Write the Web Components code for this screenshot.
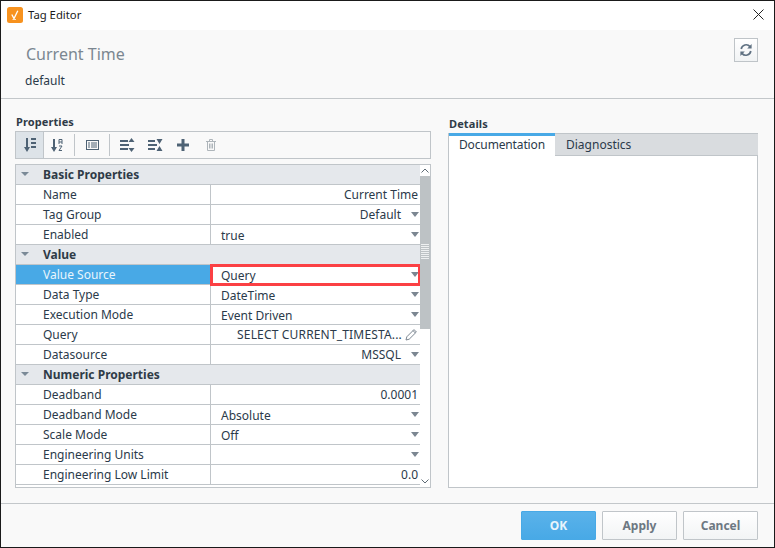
<!DOCTYPE html>
<html><head><meta charset="utf-8">
<style>
html,body{margin:0;padding:0;width:775px;height:548px;overflow:hidden;background:#fff}
body{font:12px "Noto Sans",sans-serif;color:#2b3a4a}
</style></head><body>
<tag-window>
  <title-bar slot="title">Tag Editor</title-bar>
  <tag-header slot="header" name="Current Time" provider="default"></tag-header>
  <prop-panel slot="left">
    <section-row label="Basic Properties"></section-row>
    <prop-row name="Name" value="Current Time" end></prop-row>
    <prop-row name="Tag Group" value="Default" end drop></prop-row>
    <prop-row name="Enabled" value="true" drop></prop-row>
    <section-row label="Value"></section-row>
    <prop-row name="Value Source" value="Query" drop selected></prop-row>
    <prop-row name="Data Type" value="DateTime" drop></prop-row>
    <prop-row name="Execution Mode" value="Event Driven" drop></prop-row>
    <prop-row name="Query" value="SELECT CURRENT_TIMESTA..." end pencil></prop-row>
    <prop-row name="Datasource" value="MSSQL" end drop></prop-row>
    <section-row label="Numeric Properties"></section-row>
    <prop-row name="Deadband" value="0.0001" end></prop-row>
    <prop-row name="Deadband Mode" value="Absolute" drop></prop-row>
    <prop-row name="Scale Mode" value="Off" drop></prop-row>
    <prop-row name="Engineering Units" value="" drop></prop-row>
    <prop-row name="Engineering Low Limit" value="0.0" end></prop-row>
  </prop-panel>
  <details-panel slot="right"></details-panel>
  <dialog-btn slot="foot" primary>OK</dialog-btn>
  <dialog-btn slot="foot">Apply</dialog-btn>
  <dialog-btn slot="foot">Cancel</dialog-btn>
</tag-window>
<script>
function def(name, html){
  customElements.define(name, class extends HTMLElement{
    constructor(){super();this.attachShadow({mode:'open'});}
    connectedCallback(){
      this.shadowRoot.innerHTML = typeof html==='function'?html(this):html;
    }
  });
}
const attr=(e,n)=>e.getAttribute(n)||'';
const esc=s=>s.replace(/&/g,'&amp;').replace(/</g,'&lt;');

def('tag-window',`<style>
:host{display:flex;flex-direction:column;box-sizing:border-box;width:775px;height:548px;border:1px solid #1a1a1a;background:#f9f9f9}
.header{height:68px;border-bottom:1px solid #c3c7ca;flex:none}
.main{flex:1;display:grid;grid-template-columns:416px 310px;column-gap:17px;padding:15px 16px 15px 14px;min-height:0;border-bottom:1px solid #c3c7ca}
.foot{flex:none;height:43px;display:flex;justify-content:flex-end;gap:6px;padding:7px 16px 0 0;box-sizing:border-box}
</style>
<slot name="title"></slot>
<div class="header"><slot name="header"></slot></div>
<div class="main"><slot name="left"></slot><slot name="right"></slot></div>
<div class="foot"><slot name="foot"></slot></div>`);

def('title-bar',`<style>
:host{display:flex;align-items:center;height:29px;flex:none;background:#fff;color:#1a1a1a;font-size:11.3px;padding-left:6px;gap:5px}
svg{flex:none;display:block}
.i{margin-top:-1px}
.t{flex:1;padding-bottom:2px}
.x{margin:-2px 10px 0 0}
</style>
<svg class="i" width="16" height="16" viewBox="0 0 16 16"><rect width="16" height="16" rx="2.500" fill="#f7921e"/><path d="M4.800 7.500 7 11.500 10.800 3.800" fill="none" stroke="#fff" stroke-width="1.300"/><path d="M5.500 12.500h3.500" stroke="#fde3c3" stroke-width="1"/></svg>
<span class="t"><slot></slot></span>
<svg class="x" width="11" height="11" viewBox="0 0 11 11"><path d="M.5.500 10.500 10.500M10.500.500.500 10.500" stroke="#222" stroke-width="1" fill="none"/></svg>`);

def('tag-header',e=>`<style>
:host{display:flex;height:100%;justify-content:space-between}
.n{font-size:16px;color:#7b8791;line-height:22px;margin:13px 0 0 25px}
.p{font-size:12px;color:#2b3a4a;line-height:16px;margin:8px 0 0 24px}
.r{box-sizing:border-box;width:24px;height:24px;margin:8px 16px 0 0;border:1px solid #bfc4c8;background:linear-gradient(#fff,#f1f3f4);display:flex;align-items:center;justify-content:center}
</style>
<div><div class="n">${esc(attr(e,'name'))}</div><div class="p">${esc(attr(e,'provider'))}</div></div>
<div class="r"><svg width="14" height="14" viewBox="0 0 14 14"><path d="M2.200 6A5 5 0 0 1 11 3.600" fill="none" stroke="#5f7182" stroke-width="1.700"/><path d="M12.600 1v4.400H8.200z" fill="#5f7182"/><path d="M11.800 8A5 5 0 0 1 3 10.400" fill="none" stroke="#5f7182" stroke-width="1.700"/><path d="M1.400 13V8.600h4.400z" fill="#5f7182"/></svg></div>`);

const ic={
 cat:`<svg width="12" height="14" viewBox="0 0 12 14" fill="#4e6274"><path d="M2 0h2v9h2l-3 5-3-5h2z"/><path d="M7 0h5v2H7zM7 4h5v2H7zM7 8h5v2H7z"/></svg>`,
 az:`<svg width="12" height="14" viewBox="0 0 12 14" fill="#4e6274"><path d="M2 1h2v8h2l-3 5-3-5h2z"/><path d="M8 6V1.500h3V6M8 4h3M8 8h3l-3 4.500h3" fill="none" stroke="#4e6274" stroke-width="1"/></svg>`,
 list:`<svg width="13" height="10" viewBox="0 0 13 10"><rect x=".5" y=".5" width="12" height="9" fill="none" stroke="#4e6274"/><path d="M2 3h2M5 3h6M2 5h2M5 5h6M2 7h2M5 7h6" stroke="#4e6274"/></svg>`,
 exp:`<svg width="15" height="14" viewBox="0 0 15 14" fill="#4e6274"><path d="M0 2h8v2H0zM0 6h9v2H0zM0 10h8v2H0z"/><path d="M11.500 0l3 4h-6zM11.500 14l-3-4h6z"/></svg>`,
 col:`<svg width="15" height="14" viewBox="0 0 15 14" fill="#4e6274"><path d="M0 2h7v2H0zM0 6h9v2H0zM0 10h7v2H0z"/><path d="M8.500 1h6l-3 5zM8.500 13h6l-3-5z"/></svg>`,
 add:`<svg width="12" height="12" viewBox="0 0 12 12" fill="#4e6274"><path d="M4.500 0h3v4.500H12v3H7.500V12h-3V7.500H0v-3h4.500z"/></svg>`,
 del:`<svg width="10" height="12" viewBox="0 0 10 12" fill="none" stroke="#aeb5ba"><path d="M0 2.500h10M3.500 2V.5h3V2M1.500 2.500v9h7v-9M3.500 4.500v5M5 4.500v5M6.500 4.500v5"/></svg>`
};

def('prop-panel',`<style>
:host{display:flex;flex-direction:column;min-height:0}
.h{font-weight:700;font-size:11px;line-height:15px;height:17px;padding-left:1px;color:#2f3b47;letter-spacing:.1px}
.tb{box-sizing:border-box;height:28px;border:1px solid #c0c5c9;display:flex;align-items:center;flex:none}
.b{height:26px;display:flex;align-items:center;justify-content:center;flex:none}
.on{background:#dde3e8;border-right:1px solid #c0c5c9;box-sizing:border-box}
.sep{width:1px;height:22px;background:#c0c5c9;flex:none}
.tbl{margin-top:5px;flex:1;min-height:0;border:1px solid #c0c5c9;display:flex;overflow:hidden;background:#fff}
.rows{flex:1;min-width:0;display:flex;flex-direction:column;overflow:hidden}
.sb{width:10px;flex:none;display:flex;flex-direction:column;background:#fff}
.a{height:11px;display:flex;align-items:center;justify-content:center;flex:none}
.th{height:153px;background:#bdc2c5;flex:none;display:flex;align-items:center;justify-content:center}
.g{width:8px;height:16px;margin-top:-1px;background:repeating-linear-gradient(#eef0f1 0 1px,transparent 1px 2px)}
.f{flex:1}
</style>
<div class="h">Properties</div>
<div class="tb">
 <div class="b on" style="width:28px">${ic.cat}</div><div class="b" style="width:26px;margin-right:4px">${ic.az}</div><div class="sep"></div>
 <div class="b" style="width:34px">${ic.list}</div><div class="sep"></div>
 <div class="b" style="width:34px">${ic.exp}</div><div class="b" style="width:22px">${ic.col}</div>
 <div class="b" style="width:34px">${ic.add}</div><div class="b" style="width:22px">${ic.del}</div>
</div>
<div class="tbl"><div class="rows"><slot></slot></div>
 <div class="sb">
  <div class="a"><svg width="8" height="5" viewBox="0 0 8 5"><path d="M.5 4.500 4 1l3.500 3.500" fill="none" stroke="#5f6b75"/></svg></div>
  <div class="th"><div class="g"></div></div><div class="f"></div>
  <div class="a"><svg width="8" height="5" viewBox="0 0 8 5"><path d="M.5.500 4 4 7.500.5" fill="none" stroke="#5f6b75"/></svg></div>
 </div>
</div>`);

def('section-row',e=>`<style>
:host{display:block;height:20px;flex:none;background:#e5e8ec;border-bottom:1px solid #c0c5c9;box-sizing:border-box;font-weight:700;color:#2f3b47;font-size:12px;line-height:19px;position:relative;padding-left:27px}
i{position:absolute;left:5px;top:7px;width:0;height:0;border:4.500px solid transparent;border-top:4px solid #7b8a97;border-bottom:0}
</style><i></i>${esc(attr(e,'label'))}`);

def('prop-row',e=>{
 const right=e.hasAttribute('end'), sel=e.hasAttribute('selected'), drop=e.hasAttribute('drop'), pen=e.hasAttribute('pencil');
 return `<style>
:host{display:grid;grid-template-columns:195px 1fr;height:20px;flex:none;box-sizing:border-box;border-bottom:1px solid #c0c5c9;font-size:12px;line-height:19px;color:#2b3a4a;background:#fff}
.n{padding-left:27px;border-right:1px solid #c0c5c9;white-space:nowrap;overflow:hidden;box-sizing:border-box;${sel?'background:#48a9e6;color:#e9f5fc;border-right-color:#48a9e6;':''}}
.v{position:relative;display:flex;align-items:center;white-space:nowrap;padding:0 ${drop?1:2}px 0 10px;${right?'justify-content:flex-end;':''}}
.tx{${right?'':'position:relative;top:1px;'}${pen?'letter-spacing:.17px;':''}}
.d{width:0;height:0;border:4.500px solid transparent;border-top:5px solid #7b8691;border-bottom:0;margin-left:${right?10:9}px;flex:none}
.sp{flex:1}
.hl{position:absolute;left:-1px;right:-1px;top:-1px;bottom:-2px;border:3px solid #fb4044;box-sizing:border-box}
svg{flex:none;margin-left:3px}
</style>
<div class="n">${esc(attr(e,'name'))}</div>
<div class="v"><span class="tx">${esc(attr(e,'value'))}</span>${!right&&drop?'<span class="sp"></span>':''}${drop?'<i class="d"></i>':''}${pen?`<svg width="13" height="13" viewBox="0 0 13 13"><path d="M1 12l.8-3.200L9 1.600l2.400 2.400L4.200 11.200z" fill="#fff" stroke="#7b8691"/><path d="M8 2.600l2.400 2.400" stroke="#7b8691"/></svg>`:''}${sel?'<div class="hl"></div>':''}</div>`;
});

def('details-panel',`<style>
:host{display:flex;flex-direction:column;min-height:0}
.h{font-weight:700;font-size:11px;line-height:15px;height:19px;padding-left:1px;color:#2f3b47;padding-top:2px;box-sizing:border-box;letter-spacing:.1px}
.box{flex:1;display:flex;flex-direction:column;border:1px solid #c0c5c9;border-top:0;background:#fff;min-height:0}
.tabs{display:flex;height:23px;flex:none;background:#d9dcdf;border-bottom:1px solid #c0c5c9;border-top:1px solid #c0c5c9;box-sizing:border-box;margin:0 -1px 0 0}
.tab{color:#2b3a4a;font-size:12px;line-height:22px;box-sizing:border-box;padding-left:11px}
.on{background:#fff;border-top:3px solid #48a9e6;margin:-1px 0 -1px 0;width:106px;line-height:17px;padding-left:10px;letter-spacing:-.14px}
</style>
<div class="h">Details</div>
<div class="box"><div class="tabs"><div class="tab on">Documentation</div><div class="tab">Diagnostics</div></div></div>`);

def('dialog-btn',e=>`<style>
:host{display:block;box-sizing:border-box;width:75px;height:29px;border:1px solid ${e.hasAttribute('primary')?'#48a9e6':'#c0c5c9'};border-radius:1px;background:${e.hasAttribute('primary')?'linear-gradient(#5ab2ea,#48a9e6)':'linear-gradient(#fff,#f2f4f5)'};color:${e.hasAttribute('primary')?'#e8f4fc':'#6d7882'};font-weight:700;font-size:12px;text-align:center;line-height:27px}
</style><slot></slot>`);
</script>
</body></html>
